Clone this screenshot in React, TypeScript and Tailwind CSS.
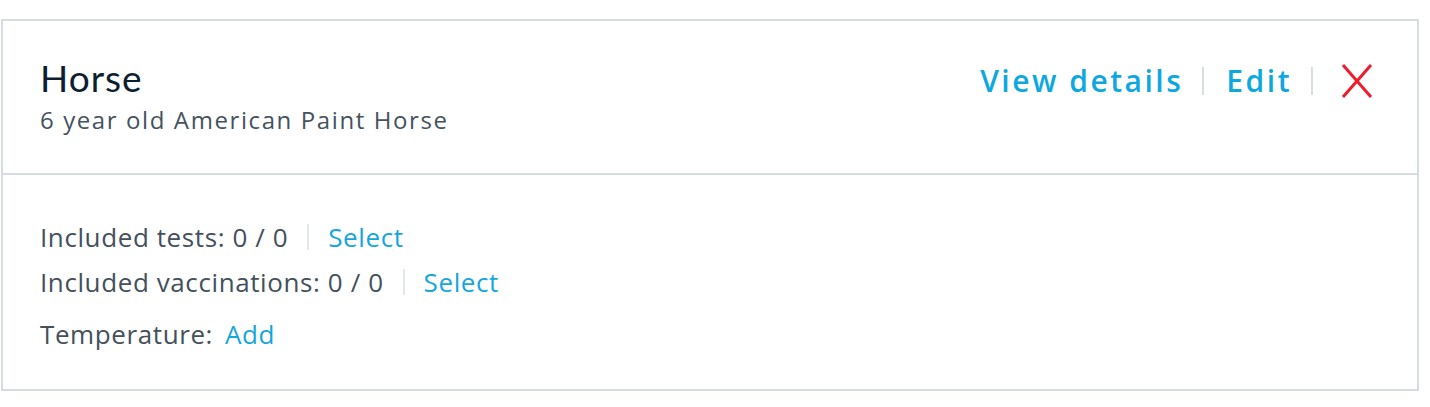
export default function App() {
  return (
    <div className="w-[1430px] h-[407px] bg-white pt-[19px] pl-px font-['Open_Sans',sans-serif]">
      <div className="w-[1418px] h-[372px] border-2 border-[#d6dce2] bg-white">
        {/* Header */}
        <div className="h-[154px] border-b-2 border-[#d6dce2] flex items-start justify-between pl-[37px] pr-[44px] pt-[35px]">
          <div>
            <h2 className="font-['Lato',sans-serif] text-[37px] leading-[44px] tracking-[1px] text-[#0c1e30]">Horse</h2>
            <p className="text-[24px] leading-[32px] tracking-[1.6px] text-[#45525f] mt-[4px]">6 year old American Paint Horse</p>
          </div>
          <div className="flex items-center pt-[5px]">
            <button className="text-[30px] font-semibold tracking-[2.5px] text-[#0ea8e0] leading-[40px]">View details</button>
            <span className="ml-[19px] mr-[22px] h-[28px] w-[2px] bg-[#d9dee3]"></span>
            <button className="text-[30px] font-semibold tracking-[2.5px] text-[#0ea8e0] leading-[40px]">Edit</button>
            <span className="ml-[19px] mr-[28px] h-[28px] w-[2px] bg-[#d9dee3]"></span>
            <button className="flex items-center justify-center w-[32px] h-[34px]">
              <svg width="32" height="34" viewBox="0 0 32 34">
                <path d="M2 1 L30 33 M30 1 L2 33" stroke="#ee1c2c" strokeWidth="3" fill="none" />
              </svg>
            </button>
          </div>
        </div>
        {/* Body */}
        <div className="pl-[37px] pt-[44px] text-[26px] leading-[36px] tracking-[0.6px] text-[#44505c] flex flex-col gap-[9px]">
          <div className="flex items-center">
            <span>Included tests: 0 / 0</span>
            <span className="mx-[19px] h-[26px] w-[2px] bg-[#e3e7ea]"></span>
            <button className="text-[#14a6dc] tracking-[0.6px]">Select</button>
          </div>
          <div className="flex items-center">
            <span>Included vaccinations: 0 / 0</span>
            <span className="mx-[19px] h-[26px] w-[2px] bg-[#e3e7ea]"></span>
            <button className="text-[#14a6dc] tracking-[0.6px]">Select</button>
          </div>
          <div className="flex items-center mt-[7px]">
            <span>Temperature:</span>
            <button className="ml-[12px] text-[#14a6dc] tracking-[0.6px]">Add</button>
          </div>
        </div>
      </div>
    </div>
  );
}
